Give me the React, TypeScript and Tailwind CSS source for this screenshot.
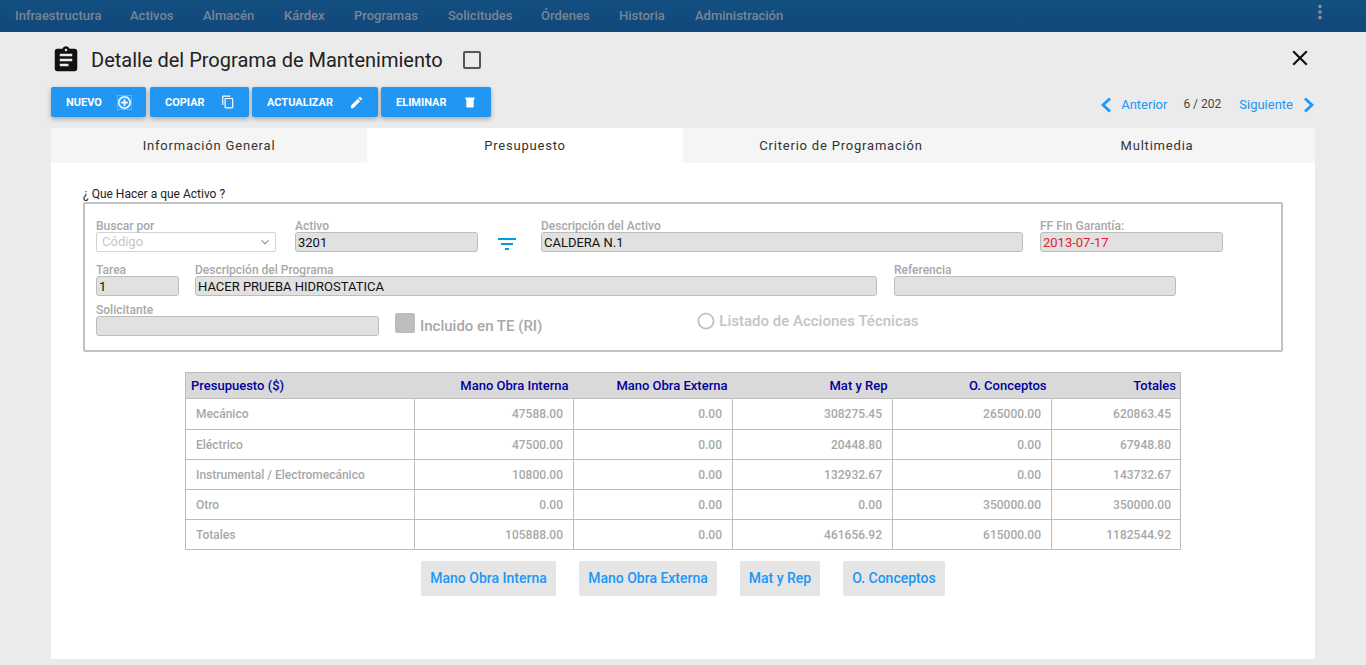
import {
  MdAddCircleOutline,
  MdAssignment,
  MdCheckBoxOutlineBlank,
  MdClose,
  MdContentCopy,
  MdEdit,
  MdExpandMore,
  MdFilterList,
  MdMoreVert,
  MdRadioButtonUnchecked,
} from "react-icons/md";
import type { ReactNode } from "react";

const menu = [
  { label: "Infraestructura", width: "w-[115px]" },
  { label: "Activos", width: "w-[73px]" },
  { label: "Almacén", width: "w-[81px]" },
  { label: "Kárdex", width: "w-[70px]" },
  { label: "Programas", width: "w-[94px]" },
  { label: "Solicitudes", width: "w-[93px]" },
  { label: "Órdenes", width: "w-[78px]" },
  { label: "Historia", width: "w-[76px]" },
  { label: "Administración", width: "w-[100px]" },
];

const tabs = ["Información General", "Presupuesto", "Criterio de Programación", "Multimedia"];

const rows = [
  ["Mecánico", "47588.00", "0.00", "308275.45", "265000.00", "620863.45"],
  ["Eléctrico", "47500.00", "0.00", "20448.80", "0.00", "67948.80"],
  ["Instrumental / Electromecánico", "10800.00", "0.00", "132932.67", "0.00", "143732.67"],
  ["Otro", "0.00", "0.00", "0.00", "350000.00", "350000.00"],
  ["Totales", "105888.00", "0.00", "461656.92", "615000.00", "1182544.92"],
];

function ActionButton({ label, width, icon }: { label: string; width: string; icon: ReactNode }) {
  return (
    <button className={`${width} h-[30px] flex items-center justify-between pl-[15px] pr-[14px] bg-[#2196f3] text-white text-[11px] font-bold rounded-[2px] shadow-[0_2px_5px_rgba(0,0,0,0.3)]`}>
      <span className="mt-[2px]">{label}</span>
      {icon}
    </button>
  );
}

function Field({ label, value, width, className = "", valueClass = "text-[#111]" }: { label: string; value?: string; width: string; className?: string; valueClass?: string }) {
  return (
    <div className={`${width} ${className} shrink-0`}>
      <div className="h-[12px] text-[12px] leading-[12px] font-medium text-[#a8a8a8] whitespace-nowrap">{label}</div>
      <input
        readOnly
        value={value ?? ""}
        className={`block w-full h-[20px] px-[2px] text-[13px] bg-[#e1e1e1] border border-[#bdbdbd] rounded-[3px] outline-none ${valueClass}`}
      />
    </div>
  );
}

function SideButton({ label, width }: { label: string; width: string }) {
  return (
    <button className={`${width} h-[35px] bg-[#e5e5e5] rounded-[2px] text-[14px] font-medium text-[#2196f3]`}>{label}</button>
  );
}

function Chevron({ points, className = "" }: { points: string; className?: string }) {
  return (
    <svg width="14" height="16" viewBox="0 0 14 16" fill="none" stroke="#2196f3" strokeWidth="2.8" className={className}>
      <polyline points={points} />
    </svg>
  );
}

function TrashIcon() {
  return (
    <svg width="10" height="11" viewBox="0 0 10 11" fill="white" className="mr-[2px]">
      <path d="M0.5 0.5h9v2h-0.8v7.2c0 .5-.4 .8-.8 .8H2.1c-.4 0-.8-.3-.8-.8V2.5H0.5z" />
    </svg>
  );
}

export default function App() {
  return (
    <div className="w-[1366px] h-[665px] overflow-hidden bg-[#ebebeb] font-['Roboto',sans-serif]">
      <header className="h-[32px] flex items-center pl-[15px] pr-[36px] bg-gradient-to-b from-[#144f82] to-[#11477a]">
        {menu.map((m) => (
          <span key={m.label} className={`${m.width} text-[13px] font-medium text-[#7b8591] whitespace-nowrap`}>
            {m.label}
          </span>
        ))}
        <MdMoreVert className="ml-auto text-[#8a8f95]" size={22} style={{ marginTop: -8, marginRight: -1 }} />
      </header>

      <div className="mx-[51px]">
        <div className="h-[55px] flex items-center">
          <MdAssignment size={30} className="text-[#111]" />
          <h1 className="ml-[10px] text-[20px] text-[#222]">Detalle del Programa de Mantenimiento</h1>
          <MdCheckBoxOutlineBlank size={24} className="ml-[17px] text-[#555]" />
          <MdClose size={26} className="ml-auto mr-[2px] -mt-[3px] text-[#111]" />
        </div>

        <div className="h-[41px] flex items-start">
          <ActionButton label="NUEVO" width="w-[95px]" icon={<MdAddCircleOutline size={15} stroke="currentColor" strokeWidth={0.8} />} />
          <ActionButton label="COPIAR" width="w-[99px] ml-[4px]" icon={<MdContentCopy size={14} />} />
          <ActionButton label="ACTUALIZAR" width="w-[126px] ml-[3px]" icon={<MdEdit size={15} />} />
          <ActionButton label="ELIMINAR" width="w-[110px] ml-[3px]" icon={<TrashIcon />} />
          <div className="ml-auto h-[36px] flex items-center text-[13px]">
            <Chevron points="10,1.5 3,8 10,14.5" />
            <span className="ml-[7px] text-[#2196f3]">Anterior</span>
            <span className="ml-[16px] -mt-[2px] text-[12px] text-[#444]">6 / 202</span>
            <span className="ml-[18px] text-[#2196f3]">Siguiente</span>
            <Chevron points="4,1.5 11,8 4,14.5" className="ml-[8px]" />
          </div>
        </div>

        <main className="h-[531px] bg-white">
          <div className="flex h-[35px] bg-[#f5f5f5]">
            {tabs.map((t, i) => (
              <div key={t} className={`flex-1 flex items-center justify-center text-[13px] tracking-[0.8px] text-[#333] ${i === 1 ? "bg-white" : ""}`}>
                {t}
              </div>
            ))}
          </div>

          <div className="pt-[25px] pl-[32px]">
            <div className="h-[14px] text-[12px] leading-[12px] text-[#222]">¿ Que Hacer a que Activo ?</div>
            <section className="w-[1200px] h-[150px] border-2 border-[#c2c2c2] rounded-[2px] pt-[16px] pl-[11px]">
              <div className="flex">
                <div className="w-[180px] shrink-0">
                  <div className="h-[12px] text-[12px] leading-[12px] font-medium text-[#a8a8a8]">Buscar por</div>
                  <div className="h-[20px] flex items-center justify-between pl-[5px] pr-[2px] text-[13px] text-[#c8c8c8] bg-white border border-[#d4d4d4] rounded-[2px]">
                    <span>Código</span>
                    <MdExpandMore size={16} className="text-[#a5a5a5]" />
                  </div>
                </div>
                <Field label="Activo" value="3201" width="w-[183px]" className="ml-[19px]" />
                <MdFilterList size={24} className="ml-[17px] mt-[12px] shrink-0 text-[#039be5]" />
                <Field label="Descripción del Activo" value="CALDERA N.1" width="w-[482px]" className="ml-[22px]" />
                <Field label="FF Fin Garantía:" value="2013-07-17" width="w-[183px]" className="ml-[17px]" valueClass="text-[#e5202c]" />
              </div>
              <div className="flex mt-[8px]">
                <Field label="Tarea" value="1" width="w-[83px]" />
                <Field label="Descripción del Programa" value="HACER PRUEBA HIDROSTATICA" width="w-[682px]" className="ml-[16px]" />
                <Field label="Referencia" width="w-[282px]" className="ml-[17px]" />
              </div>
              <div className="flex mt-[8px]">
                <Field label="Solicitante" width="w-[283px]" />
                <div className="ml-[16px] mt-[9px] h-[20px] flex items-center">
                  <span className="w-[20px] h-[20px] bg-[#bdbdbd] rounded-[2px]" />
                  <span className="ml-[5px] mt-[6px] text-[15px] font-medium text-[#a8a8a8] whitespace-nowrap">Incluido en TE (RI)</span>
                </div>
                <div className="ml-[154px] mt-[7px] h-[20px] flex items-center">
                  <MdRadioButtonUnchecked size={20} className="text-[#bdbdbd]" />
                  <span className="ml-[3px] text-[15px] font-medium text-[#c4c4c4] whitespace-nowrap">Listado de Acciones Técnicas</span>
                </div>
              </div>
            </section>
          </div>

          <table className="ml-[134px] mt-[20px] w-[995px] table-fixed border-collapse text-[12px] font-medium">
            <colgroup>
              <col className="w-[229px]" />
              <col className="w-[159px]" />
              <col className="w-[159px]" />
              <col className="w-[160px]" />
              <col className="w-[159px]" />
              <col className="w-[129px]" />
            </colgroup>
            <thead>
              <tr className="h-[26px] bg-[#d9d9d9] text-[13px] text-[#00009c] border border-[#bdbdbd] border-b-0">
                <th className="pl-[5px] text-left font-medium">Presupuesto ($)</th>
                <th className="pr-[5px] text-right font-medium">Mano Obra Interna</th>
                <th className="pr-[5px] text-right font-medium">Mano Obra Externa</th>
                <th className="pr-[5px] text-right font-medium">Mat y Rep</th>
                <th className="pr-[5px] text-right font-medium">O. Conceptos</th>
                <th className="pr-[4px] text-right font-medium">Totales</th>
              </tr>
            </thead>
            <tbody className="text-[#a8a8a8]">
              {rows.map((r, i) => (
                <tr key={r[0]} className={i === 0 ? "h-[31px]" : "h-[30px]"}>
                  {r.map((c, j) => (
                    <td key={j} className={`border border-[#bdbdbd] ${j === 0 ? "pl-[10px] text-left" : j === 5 ? "pr-[9px] text-right" : "pr-[10px] text-right"}`}>
                      {c}
                    </td>
                  ))}
                </tr>
              ))}
            </tbody>
          </table>

          <div className="ml-[370px] mt-[11px] flex gap-[23px]">
            <SideButton label="Mano Obra Interna" width="w-[135px]" />
            <SideButton label="Mano Obra Externa" width="w-[138px]" />
            <SideButton label="Mat y Rep" width="w-[80px]" />
            <SideButton label="O. Conceptos" width="w-[102px]" />
          </div>
        </main>
      </div>
    </div>
  );
}
